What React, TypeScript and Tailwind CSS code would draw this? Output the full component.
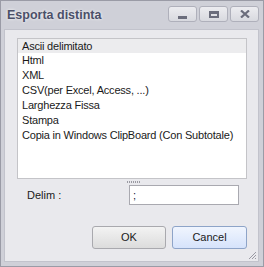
import React from "react";

const items = [
  "Ascii delimitato",
  "Html",
  "XML",
  "CSV(per Excel, Access, ...)",
  "Larghezza Fissa",
  "Stampa",
  "Copia in Windows ClipBoard (Con Subtotale)",
];

const F = "'Liberation Sans', Arial, sans-serif";

function TitleBtn({ children }: { children: React.ReactNode }) {
  return (
    <div className="w-[29px] h-[16px] rounded-[3px] border border-[#afb0bb] bg-gradient-to-b from-[#ececf0] to-[#d8d9df] flex items-center justify-center">
      {children}
    </div>
  );
}

export default function App() {
  return (
    <div
      className="w-[264px] h-[267px] bg-[#cfd0d8] border border-[#9a9ba6] flex flex-col"
      style={{ fontFamily: F }}
    >
      <div className="h-[28px] flex items-start pl-[6px] pr-[4px] pt-[5px]">
        <div
          className="flex-1 text-[12.5px] font-bold text-[#4b5069] leading-[16px] pt-[1px]"
          style={{ fontFamily: F, textShadow: "0 0 3px #ffffff" }}
        >
          Esporta distinta
        </div>
        <div className="flex gap-[2px]">
          <TitleBtn>
            <div className="w-[9px] h-[3px] bg-[#6b6d7c] mt-[6px]" />
          </TitleBtn>
          <TitleBtn>
            <div className="w-[10px] h-[7px] border-[2px] border-t-[3px] border-[#6b6d7c]" />
          </TitleBtn>
          <TitleBtn>
            <svg width="10" height="8" viewBox="0 0 10 8">
              <path d="M1 0.5 L9 7.5 M9 0.5 L1 7.5" stroke="#6b6d7c" strokeWidth="2.2" />
            </svg>
          </TitleBtn>
        </div>
      </div>
      <div className="flex-1 ml-[3px] mr-[4px] mb-[4px] bg-[#e9e9ed] border border-[#c2c3cc] flex flex-col relative">
        <div className="mt-[8px] ml-[12px] mr-[11px] h-[141px] bg-white border border-[#c4c4c8]">
          {items.map((t, i) => (
            <div
              key={t}
              className={`text-[11px] tracking-[-0.2px] text-[#1a1a1a] pl-[4px] whitespace-nowrap ${
                i === 0 ? "bg-[#ececee] h-[14px] leading-[14px]" : "h-[15px] leading-[15px]"
              }`}
            >
              {t}
            </div>
          ))}
        </div>
        <div className="flex justify-center mt-[2px] h-[2px]">
          <div className="flex gap-[1px] ml-[4px]">
            {[0, 1, 2, 3, 4, 5, 6].map((k) => (
              <div key={k} className="w-[1px] h-[2px] bg-[#9a9aa2]" />
            ))}
          </div>
        </div>
        <div className="flex items-center mt-[2px] h-[20px]">
          <div className="ml-[22px] w-[102px] text-[11px] text-[#1a1a1a]">Delim :</div>
          <div className="w-[110px] h-[20px] border border-[#a9a9b0] bg-white text-[11px] leading-[18px] pl-[3px] text-[#202040]">
            ;
          </div>
        </div>
        <div className="flex justify-end gap-[6px] mr-[11px] mt-[21px]">
          <div className="w-[74px] h-[23px] rounded-[3px] border border-[#a9a9ae] bg-gradient-to-b from-[#f3f3f3] to-[#dcdcdc] flex items-center justify-center text-[11px] text-[#1a1a1a]">
            OK
          </div>
          <div className="w-[75px] h-[23px] rounded-[3px] border border-[#8ea4c8] bg-gradient-to-b from-[#f0f5fe] to-[#d6e3fb] flex items-center justify-center text-[11px] text-[#1a1a1a]">
            Cancel
          </div>
        </div>
        <svg className="absolute right-[1px] bottom-[1px]" width="10" height="10" viewBox="0 0 10 10">
          <path d="M9 2 L2 9 M9 5 L5 9 M9 8 L8 9" stroke="#9a9aa4" strokeWidth="1" />
        </svg>
      </div>
    </div>
  );
}
